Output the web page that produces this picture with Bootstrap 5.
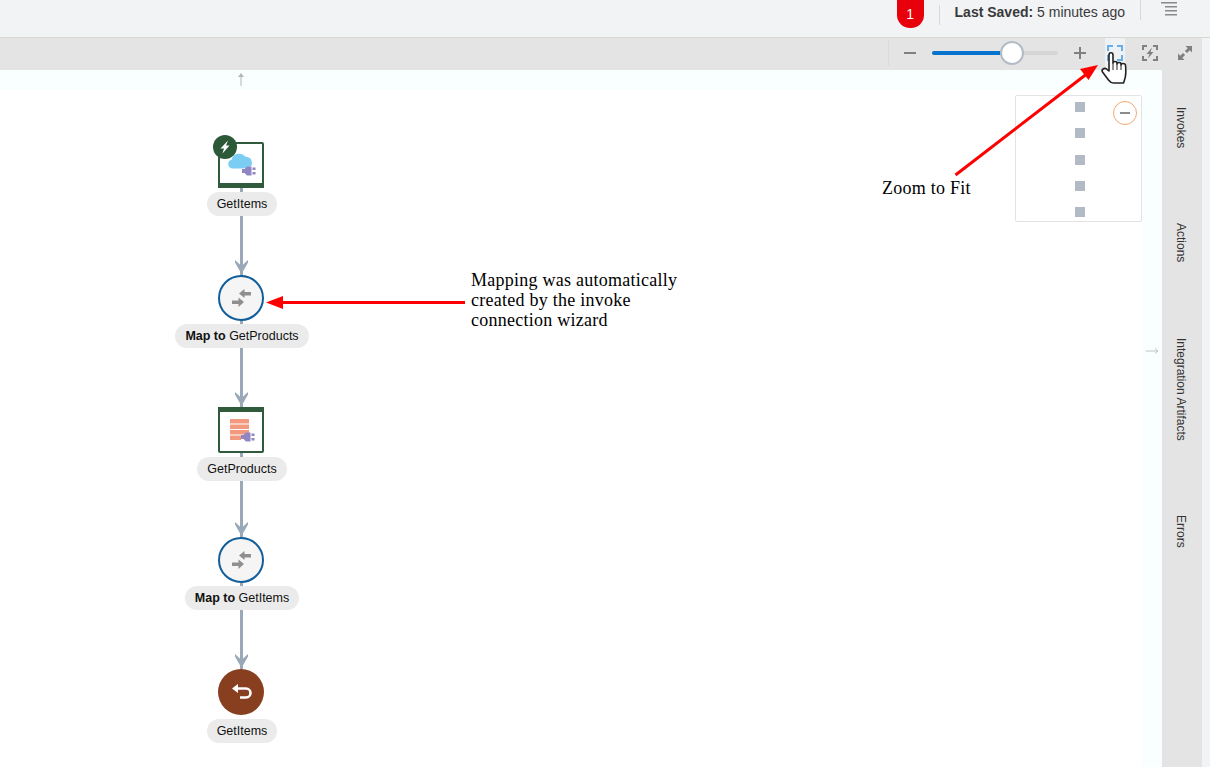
<!DOCTYPE html>
<html lang="en">

<head>
  <meta charset="UTF-8">
  <meta name="viewport" content="width=device-width, initial-scale=1.0">
  <title>Integration Canvas</title>
  <link href="https://cdn.jsdelivr.net/npm/bootstrap@5.3.0/dist/css/bootstrap.min.css" rel="stylesheet">
  <style>
    html, body {
      height: 767px;
      overflow: hidden;
    }

    body {
      background-color: #f1f3f5;
      font-family: "Liberation Sans", Arial, sans-serif;
      color: #1a1a1a;
    }

    /* Header */
    .top-bar {
      height: 38px;
      border-bottom: 1px solid #d9d8d0;
      padding-right: 33px;
    }

    .error-count {
      width: 27px;
      height: 28px;
      background-color: #e8000b;
      color: #fff;
      font-size: 14px;
      border-radius: 0 0 13px 13px;
      margin-right: 15px;
    }

    .bar-sep {
      width: 1px;
      height: 20px;
      background-color: #d6d8da;
    }

    .sep-a {
      margin-top: 5px;
    }

    .sep-b {
      margin-top: 0;
      margin-left: 15px;
      margin-right: 20px;
    }

    .saved-text {
      font-size: 14px;
      color: #3a3a3a;
      margin: 4px 0 0 15px;
      line-height: 17px;
    }

    /* Toolbar */
    .tool-bar {
      height: 32px;
      width: 1202px;
      padding-bottom: 2px;
      background-color: #e4e4e4;
    }

    .tool-sep {
      width: 1px;
      height: 26px;
      background-color: #d9dadb;
      margin-right: 15px;
    }

    .zoom-track {
      width: 126px;
      height: 4px;
      background-color: #d6d6d6;
      border-radius: 2px;
      margin: 0 16px;
    }

    .zoom-fill {
      width: 80px;
      height: 4px;
      background-color: #0572ce;
      border-radius: 2px;
    }

    .zoom-thumb {
      left: 68px;
      top: -10px;
      width: 24px;
      height: 24px;
      background-color: #fff;
      border: 2px solid #b3bcc5;
      border-radius: 50%;
    }

    .fit-btn {
      width: 20px;
      height: 30px;
      margin-left: 19px;
      background-color: #eef2f5;
    }

    .spark-btn {
      margin-left: 17px;
    }

    .grow-btn {
      margin-left: 20px;
      margin-right: 10px;
    }

    /* Main area */
    .work-area {
      height: 697px;
      width: 1202px;
    }

    .canvas-tint {
      width: 1162px;
      height: 697px;
      background-color: #f8fffe;
    }

    .canvas-inner {
      width: 1142px;
      height: 676px;
      margin-top: 20px;
      background-color: #fff;
    }

    .side-rail {
      width: 40px;
      height: 697px;
      background-color: #e4e4e4;
      padding-top: 37px;
      padding-right: 3px;
      gap: 75px;
    }

    .rail-tab {
      writing-mode: vertical-rl;
      font-size: 12px;
      line-height: 14px;
      color: #333;
    }

    /* Flow */
    .flow-col {
      width: 302px;
      margin-left: 90px;
      padding-top: 52px;
    }

    .flow-card {
      width: 46px;
      height: 46px;
      display: block;
    }

    .flow-badge {
      left: -5px;
      top: -7px;
      width: 24px;
      height: 24px;
    }

    .flow-round {
      width: 46px;
      height: 46px;
      display: block;
    }

    .flow-pill {
      height: 24px;
      line-height: 25px;
      padding: 0 10px;
      margin-left: 2px;
      font-size: 12.5px;
      color: #111;
      background-color: #ebebeb;
      border-radius: 12px;
      white-space: nowrap;
    }

    .flow-link {
      width: 3px;
      background-color: #9aa9b7;
    }

    .flow-link svg {
      left: -5px;
      bottom: 1px;
    }

    .link-a { height: 59px; }
    .link-c { height: 56px; }

    .stub-a { height: 4px; }
    .stub-b { height: 3px; }
    .gap-a { height: 4px; }

    /* Minimap */
    .mini-map {
      left: 1015px;
      top: 25px;
      width: 127px;
      height: 127px;
      background-color: #fff;
      border: 1px solid #e3e3e3;
      border-radius: 2px;
      padding-top: 6px;
      padding-left: 59px;
      gap: 16.3px;
    }

    .mini-dot {
      width: 10px;
      height: 10px;
      background-color: #b2bbc5;
    }

    .mini-close {
      left: 97px;
      top: 5px;
      width: 24px;
      height: 24px;
      background-color: #fff;
      border: 1px solid #f2a873;
      border-radius: 50%;
    }

    .mini-close span {
      width: 10px;
      height: 2px;
      background-color: #8b8b8b;
    }

    /* Notes drawn on the screenshot */
    .overlay-arrows {
      left: 0;
      top: 0;
      pointer-events: none;
    }

    .note-text {
      font-family: "Liberation Serif", "Times New Roman", serif;
      font-size: 18px;
      line-height: 20px;
      letter-spacing: .25px;
      color: #000;
    }

    .note-map {
      left: 471px;
      top: 270px;
    }

    .note-fit {
      left: 882px;
      top: 178px;
    }
  </style>
</head>

<body class="position-relative">
  <svg width="0" height="0" class="position-absolute">
    <defs>
      <symbol id="plug" viewBox="0 0 14 10">
        <path fill="#8f86c2" d="M0 3h2.500L5 .5h4.500v9H5L2.500 7H0z" />
        <rect fill="#8f86c2" x="10.500" y="1.500" width="3" height="2.500" />
        <rect fill="#8f86c2" x="10.500" y="6" width="3" height="2.500" />
      </symbol>
      <symbol id="merge" viewBox="0 0 20 18">
        <path fill="#8f8f8f" d="M7.500 4.500 13 0v3h6.500v3.500H13V9z" />
        <path fill="#8f8f8f" d="M12.500 13 7 8.500v3H.5V15H7v3z" />
      </symbol>
      <symbol id="head" viewBox="0 0 13 14">
        <path fill="#9aa9b7" d="M0 0 6.500 6 13 0v2.500L6.500 14 0 2.500z" />
      </symbol>
    </defs>
  </svg>

  <!-- Header -->
  <div class="top-bar d-flex justify-content-end align-items-start">
    <div class="error-count d-flex align-items-center justify-content-center">1</div>
    <div class="bar-sep sep-a"></div>
    <div class="saved-text"><b>Last Saved:</b> 5 minutes ago</div>
    <div class="bar-sep sep-b"></div>
    <svg width="16" height="16" viewBox="0 0 16 16">
      <rect fill="#8a8a8a" x="0" y="2" width="16" height="1.500" />
      <rect fill="#8a8a8a" x="4" y="6" width="12" height="1.500" />
      <rect fill="#8a8a8a" x="4" y="10" width="12" height="1.500" />
      <rect fill="#8a8a8a" x="4" y="14" width="12" height="1.500" />
    </svg>
  </div>

  <!-- Toolbar -->
  <div class="tool-bar d-flex justify-content-end align-items-center">
    <div class="tool-sep"></div>
    <svg width="12" height="12" viewBox="0 0 12 12"><rect fill="#808080" y="5" width="12" height="2" /></svg>
    <div class="zoom-track position-relative">
      <div class="zoom-fill"></div>
      <div class="zoom-thumb position-absolute"></div>
    </div>
    <svg width="12" height="12" viewBox="0 0 12 12"><path fill="#808080" d="M0 5h5V0h2v5h5v2H7v5H5V7H0z" /></svg>
    <div class="fit-btn d-flex align-items-center justify-content-center">
      <svg width="16" height="16" viewBox="0 0 16 16" fill="none" stroke="#69aee6" stroke-width="2">
        <path d="M1 6V1h5M10 1h5v5M15 10v5h-5M6 15H1v-5" />
      </svg>
    </div>
    <svg class="spark-btn" width="16" height="16" viewBox="0 0 16 16" fill="none" stroke="#808080" stroke-width="2">
      <path d="M1 5V1h4M11 1h4v4M15 11v4h-4M5 15H1v-4" />
      <path fill="#808080" stroke="none" d="M10 2.500 4.500 9h3L6 13.500 11.500 7h-3z" />
    </svg>
    <svg class="grow-btn" width="14" height="14" viewBox="0 0 14 14">
      <path fill="#808080" d="M7.500 0H14v6.500l-2.200-2.200-2.800 2.800L6.900 5l2.800-2.800zM0 14V7.500l2.200 2.200L5 6.900 7.100 9l-2.800 2.800L6.500 14z" />
    </svg>
  </div>

  <!-- Canvas and side rail -->
  <div class="work-area d-flex">
    <div class="canvas-tint position-relative">
      <div class="canvas-inner">
        <div class="flow-col d-flex flex-column align-items-center">

          <div class="position-relative">
            <svg class="flow-card" viewBox="0 0 46 46">
              <rect x="1" y="1" width="44" height="44" rx="1" fill="#fff" stroke="#2f5b3c" stroke-width="2" />
              <rect x="0" y="41" width="46" height="5" fill="#2f5b3c" />
              <path fill="#7ccdf3" d="M15 26.500a4.500 4.500 0 0 1-1.500-8.800 8 8 0 0 1 14-3 6 6 0 0 1 6.500 6.300c0 2-1 3.500-3 4l-6 1.500z" />
              <use href="#plug" x="24" y="24" width="14" height="10" />
            </svg>
            <svg class="flow-badge position-absolute" viewBox="0 0 24 24">
              <circle cx="12" cy="12" r="12" fill="#2c5a38" />
              <path fill="#fff" d="M15 5.500 7.500 13.500H11L9.500 18.500l7-8H13z" />
            </svg>
          </div>
          <div class="flow-link stub-a"></div>
          <div class="flow-pill">GetItems</div>
          <div class="flow-link link-a position-relative">
            <svg class="position-absolute" width="13" height="14"><use href="#head" /></svg>
          </div>

          <svg class="flow-round" viewBox="0 0 46 46">
            <circle cx="23" cy="23" r="22" fill="#f5f5f5" stroke="#115e9b" stroke-width="2" />
            <use href="#merge" x="13.500" y="14" width="20" height="18" />
          </svg>
          <div class="flow-link stub-b"></div>
          <div class="flow-pill"><b>Map to</b> GetProducts</div>
          <div class="flow-link link-a position-relative">
            <svg class="position-absolute" width="13" height="14"><use href="#head" /></svg>
          </div>

          <svg class="flow-card" viewBox="0 0 46 46">
            <rect x="1" y="1" width="44" height="44" rx="1" fill="#fff" stroke="#2f5b3c" stroke-width="2" />
            <rect x="0" y="0" width="46" height="5" fill="#2f5b3c" />
            <rect x="12" y="12" width="19" height="4.500" fill="#f29a80" />
            <rect x="12" y="17.500" width="19" height="4.500" fill="#f29a80" />
            <rect x="12" y="23" width="19" height="4.500" fill="#f29a80" />
            <rect x="12" y="28.500" width="11" height="4.500" fill="#f29a80" />
            <use href="#plug" x="23" y="25" width="14" height="10" />
          </svg>
          <div class="flow-link gap-a"></div>
          <div class="flow-pill">GetProducts</div>
          <div class="flow-link link-c position-relative">
            <svg class="position-absolute" width="13" height="14"><use href="#head" /></svg>
          </div>

          <svg class="flow-round" viewBox="0 0 46 46">
            <circle cx="23" cy="23" r="22" fill="#f5f5f5" stroke="#115e9b" stroke-width="2" />
            <use href="#merge" x="13.500" y="14" width="20" height="18" />
          </svg>
          <div class="flow-link stub-b"></div>
          <div class="flow-pill"><b>Map to</b> GetItems</div>
          <div class="flow-link link-a position-relative">
            <svg class="position-absolute" width="13" height="14"><use href="#head" /></svg>
          </div>

          <svg class="flow-round" viewBox="0 0 46 46">
            <circle cx="23" cy="23" r="23" fill="#873f1f" />
            <path fill="none" stroke="#fff" stroke-width="2.600" d="M18 19.500h10a4.500 4.500 0 0 1 0 9h-6" />
            <path fill="#fff" d="M14 19.500 20 15v9z" />
          </svg>
          <div class="gap-a"></div>
          <div class="flow-pill">GetItems</div>
        </div>
      </div>

      <!-- Minimap -->
      <div class="mini-map position-absolute d-flex flex-column">
        <div class="mini-dot"></div>
        <div class="mini-dot"></div>
        <div class="mini-dot"></div>
        <div class="mini-dot"></div>
        <div class="mini-dot"></div>
        <div class="mini-close position-absolute d-flex align-items-center justify-content-center"><span></span></div>
      </div>
    </div>

    <div class="side-rail d-flex flex-column align-items-center">
      <div class="rail-tab">Invokes</div>
      <div class="rail-tab">Actions</div>
      <div class="rail-tab">Integration Artifacts</div>
      <div class="rail-tab">Errors</div>
    </div>
  </div>

  <!-- Annotations on top of the page -->
  <div class="note-text note-map position-absolute">Mapping was automatically<br>created by the invoke<br>connection wizard</div>
  <div class="note-text note-fit position-absolute">Zoom to Fit</div>

  <svg class="overlay-arrows position-absolute" width="1210" height="767" viewBox="0 0 1210 767">
    <!-- pan arrows -->
    <path fill="none" stroke="#c9cfcf" stroke-width="1.500" d="M241 86V75" />
    <path fill="#b5b5b5" d="M241 73l-3 4h6z" />
    <path fill="none" stroke="#c2c2c2" d="M1145.500 351h12M1155 348.500l3 2.500-3 2.500" />
    <!-- red arrows -->
    <path fill="none" stroke="#f00" stroke-width="3" d="M465 302.500H278" />
    <path fill="#f00" d="M266 302.500 283 296v13z" />
    <path fill="none" stroke="#f00" stroke-width="3" d="M955.500 175 1088 73" />
    <path fill="#f00" d="M1098 65 1088.500 80 1080 69z" />
    <!-- hand cursor -->
    <path fill="#fff" stroke="#222" stroke-width="1.600" stroke-linejoin="round"
      d="M1109 71V55c0-3 4-3 4 0v8c0-2 4-2 4 0v1c0-2 4-2 4 0v1c0-2 4-2 4.500 0 .5 5 .5 11-1 15l-1 3h-10c-2 0-3.500-1-5-3l-6-8c-1.500-2.500 2-4.500 4-3z" />
    <path fill="none" stroke="#222" d="M1113 63v7M1117 64v6M1121 65v5" />
  </svg>

  <script src="https://cdn.jsdelivr.net/npm/bootstrap@5.3.0/dist/js/bootstrap.bundle.min.js"></script>
</body>

</html>
